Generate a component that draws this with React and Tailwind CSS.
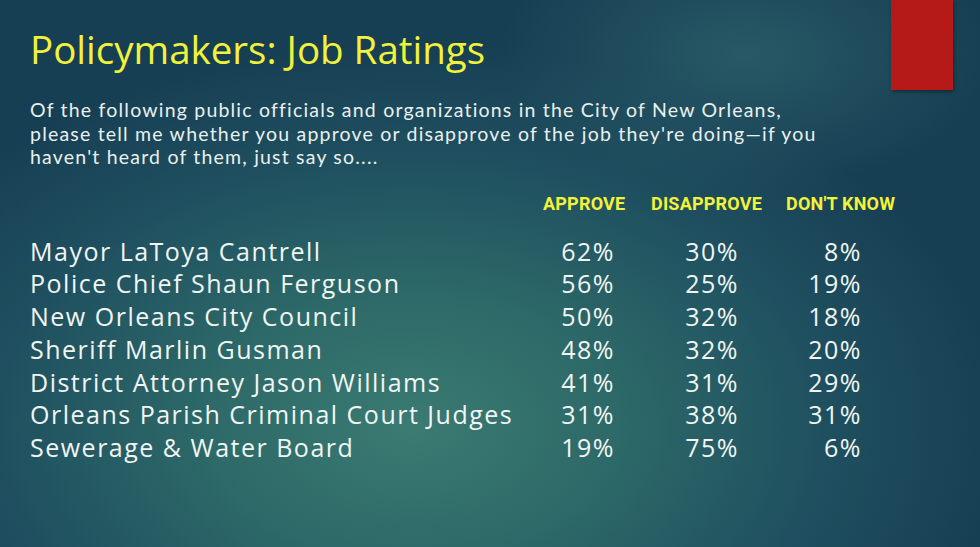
const rows = [
  ['Mayor LaToya Cantrell', '62%', '30%', '8%'],
  ['Police Chief Shaun Ferguson', '56%', '25%', '19%'],
  ['New Orleans City Council', '50%', '32%', '18%'],
  ['Sheriff Marlin Gusman', '48%', '32%', '20%'],
  ['District Attorney Jason Williams', '41%', '31%', '29%'],
  ['Orleans Parish Criminal Court Judges', '31%', '38%', '31%'],
  ['Sewerage & Water Board', '19%', '75%', '6%'],
];

export default function App() {
  return (
    <div className="relative w-[980px] h-[547px] overflow-hidden bg-[radial-gradient(ellipse_60%_70%_at_42%_78%,#3b7b72_0%,#2d6968_35%,#1f5060_70%,#173f53_100%)] font-['Open_Sans',sans-serif]">
      <div className="absolute inset-0 bg-[radial-gradient(ellipse_25%_25%_at_76%_10%,rgba(60,120,125,0.45),transparent)]" />
      <div className="absolute top-0 left-[891px] w-[62px] h-[90px] bg-[#b51a18] shadow-[1px_2px_3px_rgba(0,0,0,0.35)]" />

      <div className="relative flex flex-col px-[30px] pt-[25px]">
        <h1 className="text-[#f2f23a] text-[38.5px] leading-[48px]">Policymakers: Job Ratings</h1>

        <p className="mt-[25px] text-[#e9f0ef] font-['Lato',sans-serif] text-[19.5px] leading-[23.5px] tracking-[1.2px] whitespace-nowrap">
          Of the following public officials and organizations in the City of New Orleans,
          <br />
          please tell me whether you approve or disapprove of the job they're doing—if you
          <br />
          haven't heard of them, just say so....
        </p>

        <div className="mt-[24px] grid grid-cols-[513px_108px_135px_auto] text-[#f2f23a] font-['Roboto',sans-serif] font-bold text-[18px] leading-[22px] tracking-[0.2px]">
          <span />
          <span>APPROVE</span>
          <span>DISAPPROVE</span>
          <span>DON'T KNOW</span>
        </div>

        <div className="mt-[20px] flex flex-col text-[#f1f5f4] text-[25px] leading-[32.8px] tracking-[1.5px]">
          {rows.map((r) => (
            <div key={r[0]} className="grid grid-cols-[525px_60px_124px_123px]">
              <span className="whitespace-nowrap">{r[0]}</span>
              <span className="text-right">{r[1]}</span>
              <span className="text-right">{r[2]}</span>
              <span className="text-right">{r[3]}</span>
            </div>
          ))}
        </div>
      </div>
    </div>
  );
}
